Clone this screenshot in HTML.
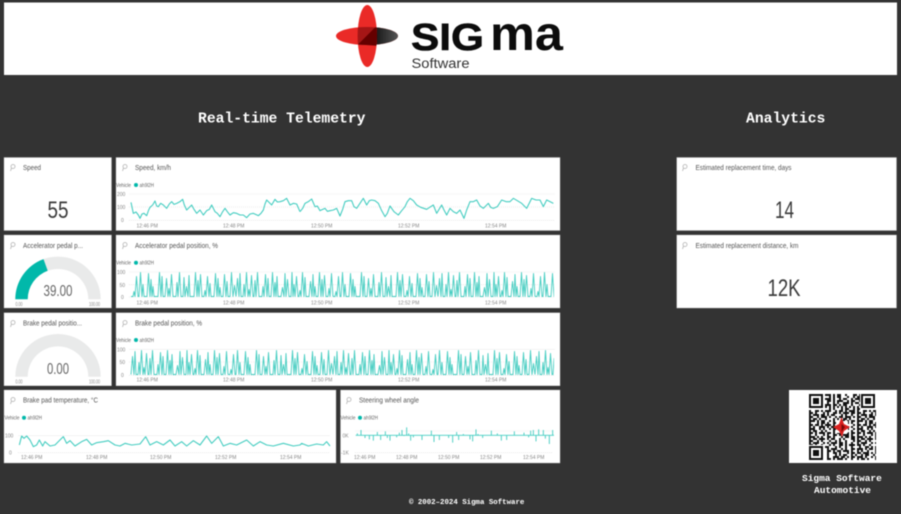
<!DOCTYPE html>
<html><head><meta charset="utf-8"><title>Sigma Software Telemetry</title>
<style>
html,body{margin:0;padding:0;background:#333;width:901px;height:514px;overflow:hidden}
svg{display:block;filter:blur(.4px)}
text{font-family:"Liberation Sans",sans-serif}
.c{fill:#fff;stroke:#bbb;stroke-width:.4}
.t{font-size:7px;fill:#555}
.l{font-size:5px;fill:#666}
.a{font-size:5px;fill:#888}
.h{font-family:"Liberation Mono",monospace;font-weight:700;fill:#fff;font-size:14.7px}
.f{font-family:"Liberation Mono",monospace;font-weight:700;fill:#fff}
.n{fill:#3a3a3a;font-weight:400}
.g{stroke:#eee;stroke-width:.6;fill:none}
.d{stroke:#ddd;stroke-width:.6;stroke-dasharray:1 1;fill:none}
.s{fill:none;stroke:#45cdc1;stroke-width:1;stroke-linejoin:round}
.p{fill:none;stroke:#b3b3b3;stroke-width:.8}
.q line{stroke:#111;stroke-width:2}
</style></head>
<body>
<svg width="901" height="514" viewBox="0 0 901 514" xmlns="http://www.w3.org/2000/svg">
<defs>
<linearGradient id="bk" x1="0" x2="1" y1="0" y2="0"><stop offset="0" stop-color="#000"/><stop offset="1" stop-color="#555"/></linearGradient>
<clipPath id="ov"><ellipse cx="367.300" cy="36" rx="9.700" ry="31"/></clipPath>
<clipPath id="ch"><rect x="129" y="260" width="425" height="120"/></clipPath>
<path id="A" d="M0 0h2l1-5 1 5l1.500-20 1.500 20h1l1.500-24 1.500 24l1-12 1 12h3l1.500-23 1.500 23l1-17 1 17l1-10 1 10h4l1.500-24 1.500 24l1-20 1 20h2l1.500-18 1.500 18l1-8 1 8l1.500-22 1.500 22h3l1-14 1 14l1.500-24 1.500 24h2l1-19 1 19l1.500-10 1.500 10l1-21 1 21h4l1.500-24 1.500 24l1-16 1 16l1.500-22 1.500 22h2l1-6 1 6l1.500-20 1.500 20l1-13 1 13h3l1.500-23 1.500 23l1-18 1 18l1-9 1 9h2l1.500-22 1.500 22l1-15 1 15h2l1.500-24 1.500 24l1.500-11 1.500 11"/>
<path id="B" d="M0 0l1.500-18 1.500 18l1-23 1 23h2l1-12 1 12l1.500-24 1.500 24l1-7 1 7l1.500-21 1.500 21h1l1-16 1 16l1.500-24 1.500 24h3l1-10 1 10l1.500-22 1.500 22l1-18 1 18h2l1.500-24 1.500 24l1-14 1 14l1-20 1 20h3l1.500-9 1.500 9l1-23 1 23l1.500-17 1.500 17h2l1-24 1 24l1-12 1 12l1.500-20 1.500 20h1l1-6 1 6l1.500-24 1.500 24l1-19 1 19h3l1.500-15 1.500 15l1-22 1 22l1-10 1 10h2l1.500-24 1.500 24l1-17 1 17l1.500-21 1.500 21h2l1-8 1 8l1.500-23 1.500 23"/>
<path id="P" d="M-2-3.500a2 2 0 1 1 4 0a2 2 0 1 1-4 0M-1.500-2L-2.500 1"/>
</defs>

<rect width="901" height="514" fill="#333"/>

<!-- logo bar -->
<rect x="4" y="2.500" width="893" height="72.500" fill="#fff"/>
<ellipse cx="367" cy="36" rx="31" ry="9" fill="#ea2a27"/>
<path d="M367 27a31 9 0 0 1 0 18z" fill="url(#bk)"/>
<ellipse cx="367.300" cy="36" rx="9.700" ry="31" fill="#ea2a27"/>
<g clip-path="url(#ov)">
<ellipse cx="367" cy="36" rx="31" ry="9" fill="#a51616"/>
<path d="M375 27.500L358 44.500 380 46V27Z" fill="#650000"/>
</g>
<text x="411" y="50" font-size="38" font-weight="700" fill="#0c0c0c" stroke="#0c0c0c" stroke-width=".6" textLength="73" lengthAdjust="spacingAndGlyphs">SIG</text>
<text x="490" y="50" font-size="48" font-weight="700" fill="#0c0c0c" textLength="73" lengthAdjust="spacingAndGlyphs">ma</text>
<text x="411.500" y="68" font-size="13.500" fill="#333" textLength="58" lengthAdjust="spacingAndGlyphs">Software</text>

<!-- headings -->
<text class="h" x="198" y="122.500">Real-time Telemetry</text>
<text class="h" x="746" y="122.500">Analytics</text>

<!-- cards -->
<rect class="c" x="4" y="157.500" width="107.500" height="73"/>
<rect class="c" x="116" y="157.500" width="444" height="73"/>
<rect class="c" x="4" y="235" width="107.500" height="73"/>
<rect class="c" x="116" y="235" width="444" height="73"/>
<rect class="c" x="4" y="312.800" width="107.500" height="73"/>
<rect class="c" x="116" y="312.800" width="444" height="73"/>
<rect class="c" x="4" y="390" width="332" height="73"/>
<rect class="c" x="340.500" y="390" width="219.500" height="73"/>
<rect class="c" x="676.800" y="157.500" width="219.700" height="73"/>
<rect class="c" x="676.800" y="235" width="219.700" height="73"/>

<!-- focus icons -->
<use href="#P" class="p" x="13" y="170"/><use href="#P" class="p" x="125" y="170"/>
<use href="#P" class="p" x="13" y="248"/><use href="#P" class="p" x="125" y="248"/>
<use href="#P" class="p" x="13" y="326"/><use href="#P" class="p" x="125" y="326"/>
<use href="#P" class="p" x="13" y="403"/><use href="#P" class="p" x="349" y="403"/>
<use href="#P" class="p" x="685" y="170"/><use href="#P" class="p" x="685" y="248"/>

<!-- titles -->
<text class="t" x="23" y="170" textLength="18" lengthAdjust="spacingAndGlyphs">Speed</text>
<text class="t" x="135" y="170" textLength="36" lengthAdjust="spacingAndGlyphs">Speed, km/h</text>
<text class="t" x="23" y="248" textLength="60" lengthAdjust="spacingAndGlyphs">Accelerator pedal p...</text>
<text class="t" x="135" y="248" textLength="83" lengthAdjust="spacingAndGlyphs">Accelerator pedal position, %</text>
<text class="t" x="23" y="325.500" textLength="59" lengthAdjust="spacingAndGlyphs">Brake pedal positio...</text>
<text class="t" x="135" y="325.500" textLength="67" lengthAdjust="spacingAndGlyphs">Brake pedal position, %</text>
<text class="t" x="23" y="402.500" textLength="75" lengthAdjust="spacingAndGlyphs">Brake pad temperature, °C</text>
<text class="t" x="359" y="402.500" textLength="60" lengthAdjust="spacingAndGlyphs">Steering wheel angle</text>
<text class="t" x="695.500" y="170" textLength="96" lengthAdjust="spacingAndGlyphs">Estimated replacement time, days</text>
<text class="t" x="695.500" y="248" textLength="103" lengthAdjust="spacingAndGlyphs">Estimated replacement distance, km</text>

<!-- big numbers -->
<text class="n" x="47.500" y="218" font-size="24" textLength="21" lengthAdjust="spacingAndGlyphs">55</text>
<text class="n" x="775" y="218" font-size="24" textLength="19" lengthAdjust="spacingAndGlyphs">14</text>
<text class="n" x="767.500" y="296" font-size="24" textLength="33" lengthAdjust="spacingAndGlyphs">12K</text>

<!-- gauges -->
<path d="M15.300 299.300A42.700 42.700 0 0 1 100.700 299.300H88.300A30.300 30.300 0 0 0 27.700 299.300Z" fill="#e9eaea"/>
<path d="M15.300 299.300A42.700 42.700 0 0 1 43.500 259.100L47.700 270.800A30.300 30.300 0 0 0 27.700 299.300Z" fill="#01b8aa"/>
<text x="43.500" y="296" font-size="15.500" fill="#666" textLength="29" lengthAdjust="spacingAndGlyphs">39.00</text>
<text class="a" x="15.500" y="306" textLength="7" lengthAdjust="spacingAndGlyphs">0.00</text>
<text class="a" x="89" y="306" textLength="11" lengthAdjust="spacingAndGlyphs">100.00</text>

<path d="M15.300 376.700A42.700 42.700 0 0 1 100.700 376.700H88.300A30.300 30.300 0 0 0 27.700 376.700Z" fill="#e9eaea"/>
<text x="47" y="374" font-size="15.500" fill="#666" textLength="22" lengthAdjust="spacingAndGlyphs">0.00</text>
<text class="a" x="15.500" y="383.500" textLength="7" lengthAdjust="spacingAndGlyphs">0.00</text>
<text class="a" x="89" y="383.500" textLength="11" lengthAdjust="spacingAndGlyphs">100.00</text>

<!-- legends -->
<text class="l" x="116" y="187" textLength="15" lengthAdjust="spacingAndGlyphs">Vehicle</text><circle cx="136" cy="185" r="2" fill="#01b8aa"/><text class="l" x="139.500" y="187" textLength="14.500" lengthAdjust="spacingAndGlyphs">ah9l2H</text>
<text class="l" x="116" y="264.700" textLength="15" lengthAdjust="spacingAndGlyphs">Vehicle</text><circle cx="136" cy="262.700" r="2" fill="#01b8aa"/><text class="l" x="139.500" y="264.700" textLength="14.500" lengthAdjust="spacingAndGlyphs">ah9l2H</text>
<text class="l" x="116" y="342" textLength="15" lengthAdjust="spacingAndGlyphs">Vehicle</text><circle cx="136" cy="340" r="2" fill="#01b8aa"/><text class="l" x="139.500" y="342" textLength="14.500" lengthAdjust="spacingAndGlyphs">ah9l2H</text>
<text class="l" x="4.500" y="419.700" textLength="15" lengthAdjust="spacingAndGlyphs">Vehicle</text><circle cx="24" cy="417.700" r="2" fill="#01b8aa"/><text class="l" x="27.500" y="419.700" textLength="14.500" lengthAdjust="spacingAndGlyphs">ah9l2H</text>
<text class="l" x="340.500" y="419.700" textLength="15" lengthAdjust="spacingAndGlyphs">Vehicle</text><circle cx="360" cy="417.700" r="2" fill="#01b8aa"/><text class="l" x="363.500" y="419.700" textLength="14.500" lengthAdjust="spacingAndGlyphs">ah9l2H</text>

<!-- grids -->
<path class="g" d="M129 194H555M129 272H555M129 349.300H555M18 435.700H330M355 431H553"/>
<path class="d" d="M129 207H555M129 220.300H555M129 284.700H555M129 297H555M129 362H555M129 375.300H555M18 452.700H330M355 452.700H553"/>

<!-- axis labels -->
<g>
<text class="a" x="117" y="196">200</text><text class="a" x="117" y="209">100</text><text class="a" x="121" y="222">0</text>
<text class="a" x="117" y="274">100</text><text class="a" x="119.500" y="287">50</text><text class="a" x="121" y="299">0</text>
<text class="a" x="117" y="351.500">100</text><text class="a" x="119.500" y="364">50</text><text class="a" x="121" y="377">0</text>
<text class="a" x="5" y="437.700">100</text><text class="a" x="9" y="454.700">0</text>
<text class="a" x="342.500" y="437.700">0K</text><text class="a" x="341" y="454.700">-1K</text>
</g>
<g>
<text class="a" x="136.500" y="227.500">12:46 PM</text><text class="a" x="223" y="227.500">12:48 PM</text><text class="a" x="311" y="227.500">12:50 PM</text><text class="a" x="398" y="227.500">12:52 PM</text><text class="a" x="485" y="227.500">12:54 PM</text>
<text class="a" x="136.500" y="304.500">12:46 PM</text><text class="a" x="223" y="304.500">12:48 PM</text><text class="a" x="311" y="304.500">12:50 PM</text><text class="a" x="398" y="304.500">12:52 PM</text><text class="a" x="485" y="304.500">12:54 PM</text>
<text class="a" x="136.500" y="381.500">12:46 PM</text><text class="a" x="223" y="381.500">12:48 PM</text><text class="a" x="311" y="381.500">12:50 PM</text><text class="a" x="398" y="381.500">12:52 PM</text><text class="a" x="485" y="381.500">12:54 PM</text>
<text class="a" x="21" y="459">12:46 PM</text><text class="a" x="86" y="459">12:48 PM</text><text class="a" x="150" y="459">12:50 PM</text><text class="a" x="215" y="459">12:52 PM</text><text class="a" x="280" y="459">12:54 PM</text>
<text class="a" x="354" y="459">12:46 PM</text><text class="a" x="396" y="459">12:48 PM</text><text class="a" x="438" y="459">12:50 PM</text><text class="a" x="480" y="459">12:52 PM</text><text class="a" x="523" y="459">12:54 PM</text>
</g>

<!-- speed line -->
<g transform="translate(0,150) scale(.33333)">
<path class="s" style="stroke-width:3.300" d="M393 157L400 190 408 186 415 195 420 205 426 192 432 190 440 197 446 180 450 172 458 165 465 153 470 168 475 170 482 160 490 165 500 175 508 162 515 155 522 163 530 160 540 155 548 148 553 165 560 180 568 172 575 165 582 178 590 190 600 180 610 195 620 182 628 178 635 165 645 185 652 190 660 200 668 185 675 175 682 185 690 195 700 188 710 190 720 195 730 195 740 203 750 192 760 190 775 197 783 190 790 180 795 162 800 150 808 158 815 165 825 148 832 156 840 155 850 152 860 145 870 165 880 160 890 162 900 185"/>
</g>
<g transform="translate(300,150) scale(.33333)">
<path class="s" style="stroke-width:3.300" d="M0 185L8 175 15 160 25 155 35 147 45 170 52 168 60 182 68 178 75 175 82 184 90 182 100 180 110 175 120 198 128 178 135 155 145 152 155 152 162 170 170 175 180 160 190 145 200 165 208 152 215 150 225 152 235 160 245 182 255 200 262 190 270 168 282 185 295 195 305 182 315 170 322 155 330 145 340 152 350 165 362 172 380 178 392 170 400 165 410 190 425 165 432 180 440 195 450 175 460 185 470 190 480 180 492 205 500 180 510 155 520 155 530 150 540 168 550 175 565 160 572 172 580 175 592 170 605 150 618 155 630 155 640 145 652 152 665 160 680 175 695 145 708 150 720 150 730 170 740 150 750 155 760 160"/>
</g>

<!-- accelerator -->
<g clip-path="url(#ch)">
<g class="s" style="stroke-width:.9">
<use href="#A" transform="translate(131,296.500)"/>
<use href="#B" transform="translate(236,296.500)"/>
<use href="#A" transform="translate(333,296.500)"/>
<use href="#B" transform="translate(438,296.500)"/>
<use href="#A" transform="translate(535,296.500)"/>
</g>
<!-- brake -->
<g class="s" style="stroke-width:.9">
<use href="#B" transform="translate(131,374.500)"/>
<use href="#A" transform="translate(228,374.500)"/>
<use href="#B" transform="translate(333,374.500)"/>
<use href="#A" transform="translate(430,374.500)"/>
<use href="#B" transform="translate(535,374.500)"/>
</g>
</g>

<!-- brake pad -->
<g transform="translate(0,310) scale(.33333)">
<path class="s" style="stroke-width:3.300" d="M58 405L65 378 72 385 80 378 90 390 100 410 110 405 118 390 128 408 135 395 150 408 165 405 175 395 190 380 200 400 210 392 225 408 245 395 260 388 275 405 290 398 310 395 325 392 345 405 360 408 375 400 395 405 420 402 437 380 450 405 470 395 490 405 510 390 525 408 545 395 560 408 580 392 600 405 620 378 635 400 655 380 670 408 690 400 710 405 740 390 760 408 780 395 800 405 820 408 850 400 880 408 900 405 905 400 925 408 950 402 970 405 980 395 990 408"/>
</g>

<!-- steering -->
<g transform="translate(300,310) scale(.33333)">
<path class="s" style="stroke-width:2.800" d="M167 376H762M172 376V370M183 376V360M195 376V384M208 376V388M220 376V392M232 376V366M242 376V390M256 376V364M262 376V384M270 376V392M290 376V382M298 376V368M306 376V360M312 376V378M320 376V352M326 376V370M332 376V392M340 376V382M366 376V390M394 376V362M402 376V396M418 376V390M446 376V384M458 376V398M470 376V366M476 376V390M490 376V372M510 376V388M518 376V394M528 376V358M534 376V372M548 376V384M574 376V362M592 376V370M604 376V392M620 376V390M643 376V364M672 376V368M686 376V382M692 376V362M700 376V360M708 376V394M716 376V358M730 376V360M736 376V386M748 376V402M758 376V360"/>
</g>

<!-- QR -->
<rect x="789" y="390" width="108" height="73" fill="#fff"/>
<g class="q">
<line x1="809" x2="876" y1="395" y2="395" stroke-dasharray="2 2 4 2 2 4 6 2 2 2 4 4 2 6 4 2 2 2 4"/>
<line x1="809" x2="876" y1="397" y2="397" stroke-dasharray="4 2 2 2 6 4 2 2 2 2 4 6 2 4 2 2 4 2"/>
<line x1="809" x2="876" y1="399" y2="399" stroke-dasharray="2 4 2 2 4 2 6 2 2 4 2 2 4 4 2 2 6 2"/>
<line x1="809" x2="876" y1="401" y2="401" stroke-dasharray="6 2 2 4 2 2 4 2 2 2 6 4 2 2 4 4 2"/>
<line x1="809" x2="876" y1="403" y2="403" stroke-dasharray="2 2 2 6 4 2 2 4 2 2 2 4 6 2 2 2 4 2"/>
<line x1="809" x2="876" y1="405" y2="405" stroke-dasharray="4 4 2 2 2 2 6 2 4 2 2 2 4 4 2 6"/>
<line x1="809" x2="876" y1="407" y2="407" stroke-dasharray="2 2 2 2 2 2 2 2 2 2 2 2 2 2 2 2 2 2"/>
<line x1="809" x2="876" y1="409" y2="409" stroke-dasharray="6 2 4 2 2 4 2 2 2 6 2 2 4 4 2 2"/>
<line x1="809" x2="876" y1="411" y2="411" stroke-dasharray="2 4 4 2 2 2 6 4 2 2 4 2 2 2 6 2"/>
<line x1="809" x2="876" y1="413" y2="413" stroke-dasharray="4 2 2 6 2 2 2 4 4 2 2 2 6 2 4 2"/>
<line x1="809" x2="876" y1="415" y2="415" stroke-dasharray="2 2 6 2 4 2 2 2 4 6 2 2 2 4 2 4"/>
<line x1="809" x2="876" y1="417" y2="417" stroke-dasharray="4 4 2 2 6 2 2 4 2 2 4 2 6 2 2 2"/>
<line x1="809" x2="876" y1="419" y2="419" stroke-dasharray="2 2 4 2 2 4 2 6 2 2 2 4 4 2 2 6"/>
<line x1="809" x2="876" y1="421" y2="421" stroke-dasharray="6 2 2 2 4 4 2 2 2 6 4 2 2 2 4 2"/>
<line x1="809" x2="876" y1="423" y2="423" stroke-dasharray="2 6 2 2 4 2 2 4 6 2 2 4 2 2 2 4"/>
<line x1="809" x2="876" y1="425" y2="425" stroke-dasharray="4 2 4 2 2 2 6 2 2 4 4 2 2 6 2 2"/>
<line x1="809" x2="876" y1="427" y2="427" stroke-dasharray="2 2 2 4 6 2 2 2 4 2 2 6 4 2 2 4"/>
<line x1="809" x2="876" y1="429" y2="429" stroke-dasharray="6 4 2 2 2 4 2 2 6 2 2 2 4 4 2 2"/>
<line x1="809" x2="876" y1="431" y2="431" stroke-dasharray="2 2 4 4 2 2 2 6 2 4 2 2 2 6 2 4"/>
<line x1="809" x2="876" y1="433" y2="433" stroke-dasharray="4 2 2 2 6 2 4 2 2 2 4 6 2 2 4 2"/>
<line x1="809" x2="876" y1="435" y2="435" stroke-dasharray="2 4 2 6 2 2 2 4 4 2 2 2 6 2 2 4"/>
<line x1="809" x2="876" y1="437" y2="437" stroke-dasharray="6 2 2 2 2 4 4 2 2 6 2 2 4 2 4 2"/>
<line x1="809" x2="876" y1="439" y2="439" stroke-dasharray="2 2 4 2 6 2 2 2 4 4 2 2 2 6 4 2"/>
<line x1="809" x2="876" y1="441" y2="441" stroke-dasharray="4 4 2 2 2 6 2 4 2 2 2 4 2 6 2 2"/>
<line x1="809" x2="876" y1="443" y2="443" stroke-dasharray="2 2 6 4 2 2 2 2 6 2 4 2 2 4 2 4"/>
<line x1="809" x2="876" y1="445" y2="445" stroke-dasharray="4 2 2 4 2 6 2 2 2 4 4 2 2 2 6 2"/>
<line x1="809" x2="876" y1="447" y2="447" stroke-dasharray="2 4 4 2 2 2 4 6 2 2 2 4 2 4 2 6"/>
<line x1="809" x2="876" y1="449" y2="449" stroke-dasharray="6 2 2 2 4 2 2 2 6 4 2 2 2 4 4 2"/>
<line x1="809" x2="876" y1="451" y2="451" stroke-dasharray="2 2 2 4 2 6 4 2 2 2 4 2 6 2 2 4"/>
<line x1="809" x2="876" y1="453" y2="453" stroke-dasharray="4 2 6 2 2 2 2 4 4 2 2 6 2 2 4 2"/>
<line x1="809" x2="876" y1="455" y2="455" stroke-dasharray="2 4 2 2 4 4 2 6 2 2 2 2 4 4 2 2"/>
<line x1="809" x2="876" y1="457" y2="457" stroke-dasharray="6 2 2 4 2 2 2 4 6 2 4 2 2 2 4 2"/>
<line x1="809" x2="876" y1="459" y2="459" stroke-dasharray="2 2 4 2 2 6 4 2 2 2 6 2 2 4 2 4"/>
</g>
<!-- finder patterns -->
<g fill="#fff" stroke="none">
<rect x="808" y="393" width="17" height="17"/><rect x="860" y="393" width="17" height="17"/><rect x="808" y="445" width="17" height="16"/>
</g>
<g fill="none" stroke="#111" stroke-width="2">
<rect x="810" y="395" width="12" height="12"/><rect x="862" y="395" width="12" height="12"/><rect x="810" y="447" width="12" height="12"/>
</g>
<g fill="#111"><rect x="813" y="398" width="6" height="6"/><rect x="865" y="398" width="6" height="6"/><rect x="813" y="450" width="6" height="6"/></g>
<rect x="836" y="421" width="12" height="12" fill="#fff"/>
<path d="M833 427L839 424 841.500 417 844 424 850 427 844 431 842 437 839 431Z" fill="#d8201f"/>
<path d="M841.500 424L845 427 841.500 432Z" fill="#7a0808"/>

<!-- footer -->
<text class="f" x="802" y="481" font-size="9.500">Sigma Software</text>
<text class="f" x="814" y="493" font-size="9.500">Automotive</text>
<text class="f" x="409" y="504" font-size="7.400">© 2002–2024 Sigma Software</text>
</svg>
</body></html>
